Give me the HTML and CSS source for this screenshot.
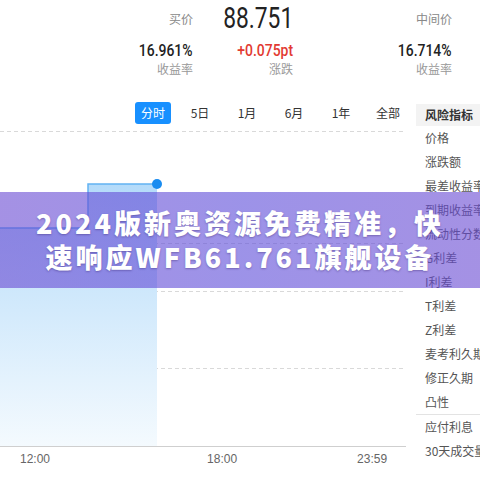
FILE: index.html
```html
<!DOCTYPE html>
<html lang="zh-CN">
<head>
<meta charset="utf-8">
<title>风险指标</title>
<link rel="stylesheet" href="styles.css">
</head>
<body>
<div class="page">
  <section class="stats">
    <div class="stat c1">
      <div class="stat-top"><span class="label">买价</span></div>
      <div class="val">16.961%</div>
      <div class="sub">收益率</div>
    </div>
    <div class="stat c2">
      <div class="stat-top"><span class="big">88.751</span></div>
      <div class="val up">+0.075pt</div>
      <div class="sub">涨跌</div>
    </div>
    <div class="stat c3">
      <div class="stat-top"><span class="label">中间价</span></div>
      <div class="val">16.714%</div>
      <div class="sub">收益率</div>
    </div>
  </section>

  <section class="main">
    <div class="chart-col">
      <nav class="tabs">
        <span class="tab active">分时</span>
        <span class="tab">5日</span>
        <span class="tab">1月</span>
        <span class="tab">6月</span>
        <span class="tab">1年</span>
        <span class="tab">全部</span>
      </nav>
      <div class="chart">
        <svg width="406" height="316" viewBox="0 0 406 316">
          <defs>
            <linearGradient id="area" x1="0" y1="0" x2="0" y2="1">
              <stop offset="0" stop-color="#b4dbfa"/>
              <stop offset="1" stop-color="#f4fafe"/>
            </linearGradient>
          </defs>
          <g stroke="#d9d9d9" stroke-dasharray="4 3" stroke-width="1">
            <line x1="0" y1="0.5" x2="406" y2="0.5"/>
            <line x1="0" y1="112.5" x2="406" y2="112.5"/>
            <line x1="0" y1="160.5" x2="406" y2="160.5"/>
            <line x1="0" y1="237.5" x2="406" y2="237.5"/>
          </g>
          <polygon points="0,97 88,97 88,53 157,53 157,315 0,315" fill="url(#area)"/>
          <path d="M0 97 H88 V53 H157" fill="none" stroke="#62b3f2" stroke-width="1.5"/>
          <line x1="0" y1="315.5" x2="406" y2="315.5" stroke="#cfcfcf" stroke-width="1"/>
          <circle cx="157" cy="53" r="5" fill="#1a8cf0"/>
        </svg>
      </div>
      <div class="times">
        <span class="t1">12:00</span>
        <span class="t2">18:00</span>
        <span class="t3">23:59</span>
      </div>
    </div>

    <aside class="risk">
      <div class="risk-head">风险指标</div>
      <ul class="risk-list">
        <li>价格</li>
        <li>涨跌额</li>
        <li>最差收益率</li>
        <li>到期收益率</li>
        <li>流动性分数</li>
        <li>G利差</li>
        <li>I利差</li>
        <li>T利差</li>
        <li>Z利差</li>
        <li>麦考利久期</li>
        <li>修正久期</li>
        <li class="sep">凸性</li>
        <li>应付利息</li>
        <li>30天成交量</li>
      </ul>
    </aside>
  </section>

  <div class="banner">
    <p>2024版新奥资源免费精准，快</p>
    <p>速响应WFB61.761旗舰设备</p>
  </div>
</div>
</body>
</html>
```

FILE: styles.css
```css
html, body {
  margin: 0;
  padding: 0;
  background: #fff;
}

body {
  font-family: "Noto Sans CJK SC", "Noto Sans", sans-serif;
  color: #333;
}

.page {
  position: relative;
  width: 480px;
  height: 480px;
  overflow: hidden;
}

/* ---------- stats ---------- */
.stats {
  display: flex;
  height: 100px;
}

.stat {
  display: flex;
  flex-direction: column;
  align-items: flex-end;
}

.c1 { width: 193px; }
.c2 { width: 100px; }
.c3 { width: 159px; }

.stat-top {
  height: 36px;
  display: flex;
  align-items: center;
}

.label {
  font-size: 12px;
  color: #888;
}

.big {
  display: inline-block;
  font-family: Roboto, "Liberation Sans", sans-serif;
  font-size: 30px;
  line-height: 36px;
  color: #222;
  transform: scaleX(0.76);
  transform-origin: right center;
}

.val {
  margin-top: 4px;
  font-family: Roboto, "Liberation Sans", sans-serif;
  font-size: 17px;
  line-height: 20px;
  font-weight: 500;
  color: #222;
  transform: scaleX(0.82);
  transform-origin: right center;
}

.val.up {
  color: #e23a32;
}

.sub {
  font-size: 12px;
  line-height: 18px;
  color: #999;
}

/* ---------- main ---------- */
.main {
  display: flex;
  gap: 10px;
}

.chart-col {
  width: 406px;
}

.tabs {
  display: flex;
  gap: 11px;
  height: 22px;
  margin: 2px 0 7px;
  padding-left: 135px;
}

.tab {
  width: 36px;
  height: 22px;
  line-height: 22px;
  text-align: center;
  font-size: 12px;
  color: #333;
  border-radius: 3px;
}

.tab.active {
  background: #1890ff;
  color: #fff;
}

.chart {
  height: 316px;
}

.chart svg {
  display: block;
}

.times {
  display: flex;
  height: 24px;
  line-height: 24px;
  font-family: "Liberation Sans", Arial, sans-serif;
  font-size: 12px;
  color: #666;
}

.t1 { margin-left: 20px; }
.t2 { margin-left: 157px; }
.t3 { margin-left: 120px; }

/* ---------- risk panel ---------- */
.risk {
  width: 64px;
  margin-top: 4px;
  white-space: nowrap;
}

.risk-head {
  height: 22px;
  line-height: 22px;
  padding-left: 9px;
  background: #f3f3f3;
  font-size: 12px;
  font-weight: 700;
  color: #333;
}

.risk-list {
  list-style: none;
  margin: 0;
  padding: 0;
}

.risk-list li {
  height: 24px;
  line-height: 24px;
  padding-left: 9px;
  font-size: 12px;
  color: #555;
}

.risk-list li.sep {
  border-bottom: 1px solid #e3e3e3;
}

/* ---------- banner overlay ---------- */
.banner {
  position: absolute;
  left: 0;
  top: 192px;
  width: 480px;
  height: 96px;
  display: flex;
  flex-direction: column;
  justify-content: center;
  align-items: center;
  background: linear-gradient(90deg, rgba(104, 72, 210, 0.6), rgba(96, 80, 218, 0.62) 50%, rgba(104, 72, 210, 0.6));
}

.banner p {
  margin: 0;
  font-size: 27px;
  line-height: 34px;
  font-weight: 900;
  letter-spacing: 3px;
  color: #fff;
  text-shadow: 0 1px 2px rgba(40, 20, 90, 0.35);
  white-space: nowrap;
}
```
